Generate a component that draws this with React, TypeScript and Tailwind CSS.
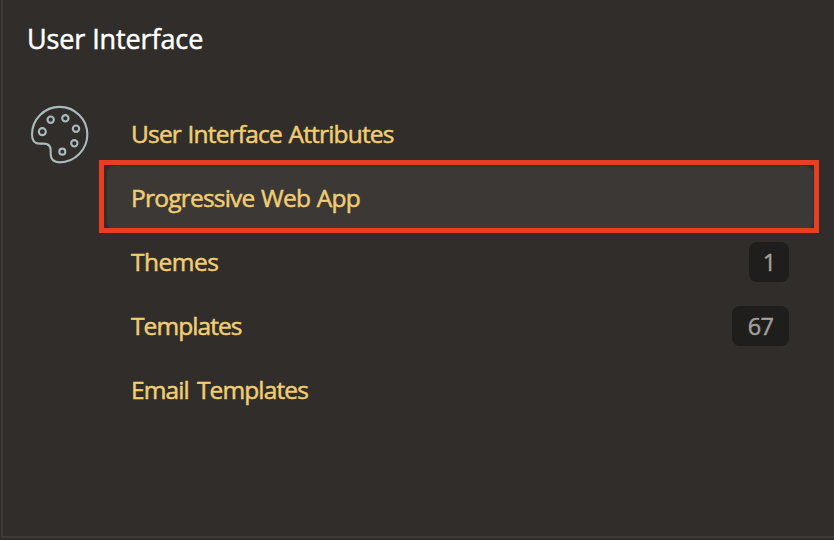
type Item = { label: string; text: string; count?: number; badge?: string; active?: boolean };

const items: Item[] = [
  { label: 'User Interface Attributes', text: 'tracking-[-0.82px] [word-spacing:1px]' },
  { label: 'Progressive Web App', text: 'tracking-[-0.78px] [word-spacing:1px]', active: true },
  { label: 'Themes', text: 'tracking-[-0.5px]', count: 1, badge: 'w-10' },
  { label: 'Templates', text: 'tracking-[-0.92px]', count: 67, badge: 'w-[57px]' },
  { label: 'Email Templates', text: 'tracking-[-0.87px] [word-spacing:2.5px]' },
];

const holes = [
  [67, 107, 10.5],
  [92, 71, 9.5],
  [136, 67, 9.5],
  [168, 98, 9.5],
  [163, 142, 9.5],
  [127, 167, 9],
];

function PaletteIcon() {
  return (
    <svg viewBox="0 0 240 228" className="h-[76px] w-20 shrink-0" fill="none" stroke="#a9bcbc" strokeWidth="6.3">
      <path d="M119 32.5C165 32.5 202 70 202 115C202 161 165 199 119 199C102 199 92 190 92 174V163C92 150 84 143 71 143H60C45 143 36 133 36 116C36 70 73 32.5 119 32.5Z" />
      {holes.map(([cx, cy, r]) => (
        <circle key={`${cx}-${cy}`} cx={cx} cy={cy} r={r} />
      ))}
    </svg>
  );
}

export default function App() {
  return (
    <div className="h-[540px] w-full overflow-hidden bg-[#302d2a] pl-px font-['Open_Sans','Noto_Sans',sans-serif]">
      <section className="h-[538px] border-b-2 border-l-2 border-[#3e3a38]">
        <h2 className="pt-[19px] pl-6 text-[27px] leading-10 font-medium tracking-[-0.12px] text-white [-webkit-text-stroke:0.5px_#fff]">
          User Interface
        </h2>
        <div className="mt-[37px] flex pl-[17px]">
          <PaletteIcon />
          <ul className="relative mt-1.5 ml-[7px] w-[706px]">
            {items.map(({ label, text, count, badge, active }) => (
              <li
                key={label}
                className={`flex h-16 items-center justify-between rounded-lg px-6 ${active ? 'bg-[#3c3835]' : ''}`}
              >
                <span
                  className={`text-[24.5px] leading-8 font-medium whitespace-nowrap text-[#f1cd74] [-webkit-text-stroke:0.5px_#f1cd74] ${text}`}
                >
                  {label}
                </span>
                {count !== undefined && (
                  <span
                    className={`flex h-10 items-center justify-center rounded-lg bg-[#201e1c] pt-px text-[23.5px] tracking-[-0.7px] text-[#a3a19f] [-webkit-text-stroke:0.4px_#a3a19f] ${badge}`}
                  >
                    {count}
                  </span>
                )}
              </li>
            ))}
            <li
              aria-hidden="true"
              className="pointer-events-none absolute top-[58px] -left-2 h-[73px] w-[720px] border-[5px] border-[#ea3e23]"
            />
          </ul>
        </div>
      </section>
    </div>
  );
}
